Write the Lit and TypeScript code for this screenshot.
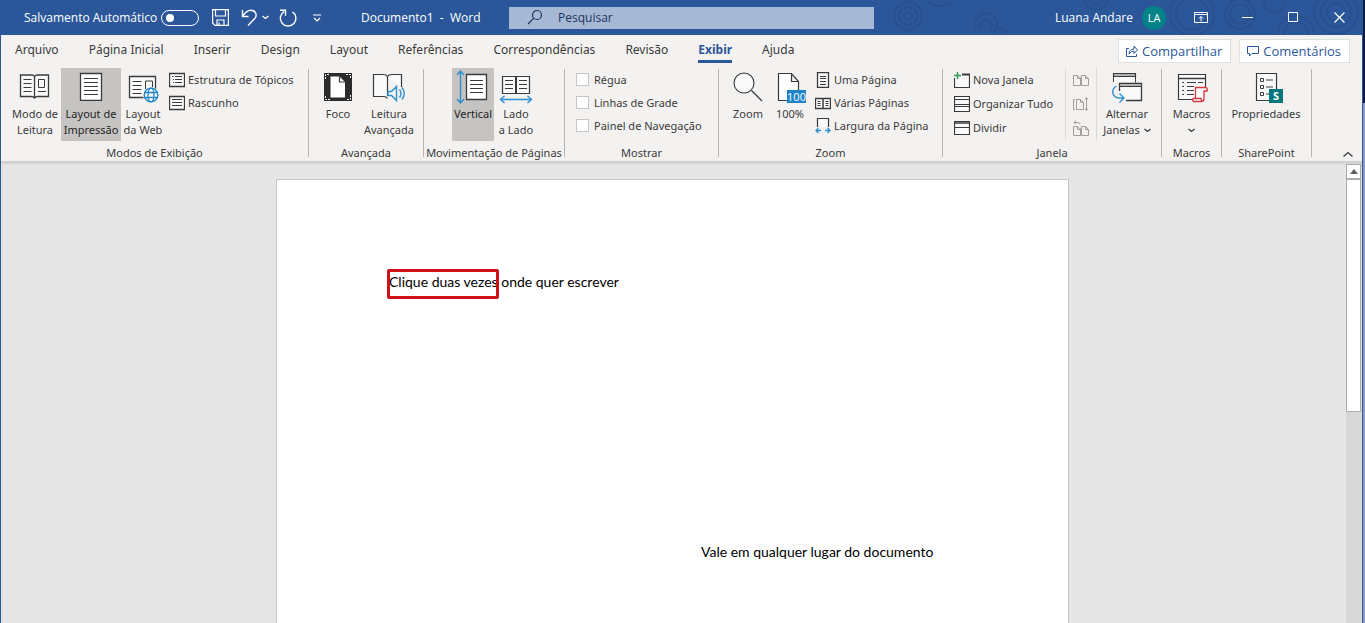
import { LitElement, html, svg, css, nothing } from "lit";
import { customElement, property, state } from "lit/decorators.js";
import { classMap } from "lit/directives/class-map.js";

const INK = "#3b3a39";
const BLUE = "#2e8fd0";

const pic = (w: number, h: number, body: unknown) => html`<svg
  width=${w} height=${h} viewBox="0 0 ${w} ${h}" fill="none" stroke=${INK} stroke-width="1" aria-hidden="true">${body}</svg>`;

const icons: Record<string, () => unknown> = {
  read: () => pic(32, 32, svg`
    <path d="M15.500 7.500c-1-1.500-2-1.500-3-1.500H1.500v21.500h11c1 0 2 .3 3 1.500c1-1.200 2-1.500 3-1.500h11V6H18.500c-1 0-2 0-3 1.500zM15.500 7.500V29" fill="#fafafa" stroke-width="1.300"/>
    <path d="M4.500 10.500h8M4.500 14.500h8M4.500 18.500h8M4.500 22.500h8M19 22.500h8M19.500 10.500h6v8h-6z"/>`),
  print: () => pic(32, 32, svg`
    <path d="M5.500 4.500h21v27h-21z" fill="#fff" stroke-width="1.300"/>
    <path d="M9 9.500h14M9 13.500h14M9 17.500h14M9 21.500h14M9 25.500h14"/>`),
  web: () => pic(32, 34, svg`
    <path d="M2.500 7.500h26v21h-26z" fill="#fafafa" stroke-width="1.300"/>
    <path d="M5.500 12.500h9M5.500 16.500h9M5.500 20.500h9M5.500 24.500h9M18.500 20v-8h7v7"/>
    <circle cx="24" cy="26" r="8" fill="#f3f2f1" stroke="none"/>
    <g stroke="#1e83c9" stroke-width="1.300"><circle cx="24" cy="26" r="6.800" fill="#fff"/><ellipse cx="24" cy="26" rx="3" ry="6.800"/><path d="M17.500 23.500h13M17.500 28.500h13"/></g>`),
  focus: () => pic(32, 34, svg`<g transform="translate(0 1)">
    <path d="M2 3h28v28H2z" fill="#2b2b2b" stroke="none"/>
    <path d="M8.500 6.500h9l5.500 5.500v15.500h-14.500z" fill="#fff" stroke="none"/>
    <path d="M17.500 6.500v5.500h5.500" stroke-width="1.200"/>
    <path d="M3.500 9V4.500H8M24 4.500h4.500V9M28.500 25v4.500H24M8 29.500H3.500V25" stroke="#fff" stroke-dasharray="2 1"/></g>`),
  listen: () => pic(34, 34, svg`
    <path d="M15.500 27V7.500c-1-1.700-2.500-2-4-2H1.500v22h10.500c1.500 0 2.500.5 3.500 2M15.500 7.500c1-1.700 2.500-2 4-2h10V18" fill="#fafafa" stroke-width="1.200"/>
    <path d="M16 22.500h3.500l5-5v14l-5-5H16zM27.500 20.500q3 4 0 8M30 18.500q4.500 6 0 12" stroke=${BLUE} stroke-width="1.400" fill="#f3f2f1"/>`),
  vertical: () => pic(36, 36, svg`
    <path d="M11.500 5.500h20v25h-20z" fill="#fff" stroke-width="1.300"/>
    <path d="M15 11.500h13M15 15.500h13M15 19.500h13M15 23.500h13"/>
    <path d="M5.500 2.500v31M2 6l3.500-4 3.500 4M2 30l3.500 4 3.500-4" stroke=${BLUE} stroke-width="1.400"/>`),
  side: () => pic(34, 36, svg`
    <path d="M3.500 7.500h27v17h-27z" fill="#fafafa" stroke-width="1.200"/><path d="M17 7v18" stroke-width="2"/>
    <path d="M6 11.500h8M6 15.500h8M6 19.500h8M20 11.500h8M20 15.500h8M20 19.500h8"/>
    <path d="M2 30.500h30M5.500 27l-4 3.500 4 3.500M28.500 27l4 3.500-4 3.500" stroke=${BLUE} stroke-width="1.400"/>`),
  zoom: () => pic(34, 34, svg`
    <circle cx="13" cy="14" r="10" fill="#fafafa" stroke-width="1.100"/><path d="M20.500 21.500 31 32" stroke-width="1.300"/>`),
  hundred: () => pic(34, 36, svg`<g transform="translate(0 1)">
    <path d="M20 30.500H5.500v-27h13l7 8V20M18.500 3.500v8h7" fill="#fff" stroke-width="1.200"/>
    <path d="M14 20h19v13H14z" fill="#1e83c9" stroke="none"/>
    <text x="23.500" y="31" font-size="11" font-family="Open Sans" fill="#fff" stroke="none" text-anchor="middle">100</text></g>`),
  windows: () => pic(34, 34, svg`
    <path d="M3.500 13V4.500h22v9" fill="#fafafa"/><path d="M3.500 4.500h22v3h-22z" fill="#b5b3b1" stroke-width="1.200"/>
    <path d="M9.500 14.500h22v17h-22z" fill="#fafafa" stroke="none"/>
    <path d="M9.500 22v-7.500h22v17H16" stroke-width="1.300"/><path d="M9.500 14.500h22v3h-22z" fill="#b5b3b1"/>
    <path d="M6.500 17c-6 3.500-4.500 11 2 12h5M9.500 24.500l4.500 4.500-4.500 4.500" stroke=${BLUE} stroke-width="1.400"/>`),
  macros: () => pic(34, 34, svg`
    <path d="M18 30.500H3.500v-25h27V18" fill="#fafafa" stroke-width="1.200"/><path d="M3.500 9.500h27" stroke-width="1.500"/>
    <path d="M7 13.500h2M12 13.500h9M23 13.500h5M7 17.500h2M12 17.500h7M7 21.500h2M12 21.500h7M7 25.500h2M12 25.500h7"/>
    <path d="M20.500 29V18.500h10.500q2 1 1 3.500h-3v8q0 2.500-3 2.500H18.500q-1.500-1-.5-3h8q0 2 1.500 2.500" stroke="#d9363e" stroke-width="1.300" fill="#fafafa"/>`),
  props: () => pic(34, 36, svg`<g transform="translate(0 1)">
    <path d="M7.500 3.500h20v27h-20z" fill="#fafafa" stroke-width="1.200"/>
    <path d="M11.500 8.500h3v3h-3zM11.500 15.500h3v3h-3zM11.500 22.500h3v3h-3zM17 10h7M17 17h7M17 24h3"/>
    <path d="M20 19h14v14H20z" fill="#03787c" stroke="none"/>
    <text x="27" y="30" font-size="11" font-weight="700" font-family="Open Sans" fill="#fff" stroke="none" text-anchor="middle">S</text></g>`),
  outline: () => pic(16, 16, svg`<path d="M.5 1.500h15v13H.5z" fill="#fafafa" stroke-width="1.300"/><path d="M3 4.500h1.500M6 4.500h7M4 7.500h1M6 7.500h7M4 10.500h1M6 10.500h7"/>`),
  draft: () => pic(16, 16, svg`<path d="M.5 1.500h15v13H.5z" fill="#fafafa" stroke-width="1.300"/><path d="M3 4.500h10M3 7.500h10M3 10.500h10"/>`),
  one: () => pic(16, 16, svg`<path d="M2.500.5h11v15h-11z" fill="#fafafa" stroke-width="1.300"/><path d="M5 4.500h6M5 6.500h6M5 9.500h6M5 12.500h6"/>`),
  many: () => pic(16, 16, svg`<path d="M.5 3.500h15v10H.5z" fill="#fafafa" stroke-width="1.300"/><path d="M8 3v11" stroke-width="1.500"/><path d="M2.500 6.500h3M2.500 8.500h3M2.500 10.500h3M10.500 6.500h3M10.500 8.500h3M10.500 10.500h3"/>`),
  width: () => pic(16, 16, svg`<path d="M2.500 9V.5h11V9" fill="#fafafa" stroke-width="1.200"/><path d="M1 12.500h5M10 12.500h5M3.500 10 1 12.500 3.500 15M12.500 10l2.500 2.500-2.500 2.500" stroke=${BLUE} stroke-width="1.300"/>`),
  newwin: () => pic(16, 16, svg`<path d="M.5 6v9.500h15v-13H8" fill="#fafafa" stroke-width="1.200"/><path d="M8 2.500h8" stroke-width="2"/><path d="M3.500 0v7M0 3.500h7" stroke="#f3f2f1" stroke-width="3"/><path d="M3.500 0v7M0 3.500h7" stroke="#2f9e4f" stroke-width="1.400"/>`),
  arrange: () => pic(16, 16, svg`<path d="M.5.500h15v15H.5zM.5 3.500h15M.5 8.500h15M.5 10.500h15" fill="#fafafa" stroke-width="1.200"/>`),
  split: () => pic(16, 16, svg`<path d="M.5 1.500h15v13H.5zM.5 7.500h15" fill="#fafafa" stroke-width="1.200"/><path d="M.5 3h15" stroke-width="1.500"/>`),
  sbs: () => pic(16, 16, svg`<path d="M.5 3.500h4l2 2h1v8h-7zM8.500 3.500h4l3 3v7h-7zM4.500 3.500v3h3M12.500 3.500v3h3" stroke="#a19f9d"/>`),
  sync: () => pic(16, 16, svg`<path d="M2 3.500H.5v10H2M3.500 3.500h4l3 3v7h-7zM7.500 3.500v3h3M13.500 2v12M12 3.500l1.500-2 1.500 2M12 12.500l1.500 2 1.500-2" stroke="#a19f9d"/>`),
  reset: () => pic(16, 16, svg`<path d="M.5 6.500h4l2 2h1v7h-7zM8.500 6.500h4l3 3v6h-7zM4.500 6.500v3h3M12.500 6.500v3h3M7 4.500q0-2-2-2H1M3 .5l-2 2 2 2" stroke="#a19f9d"/>`),
};

const caret = () => html`<svg class="caret" width="7" height="5" viewBox="0 0 7 5" fill="none" stroke=${INK} stroke-width="1.300" aria-hidden="true"><path d="M.5 1l3 2.500 3-2.500"/></svg>`;

@customElement("ribbon-big")
class RibbonBig extends LitElement {
  @property() icon = "";
  @property({ type: Array }) lines: string[] = [];
  @property({ type: Boolean }) pressed = false;
  @property({ type: Boolean }) menu = false;

  static styles = css`
    :host { display: block; }
    button {
      width: 100%; height: 73px; border: 0; padding: 0; background: none; color: #3b3a39;
      font: 11px/16px "Noto Sans", sans-serif; white-space: nowrap;
      display: flex; flex-direction: column; align-items: center;
    }
    button:hover { background: #dedcda; }
    button[aria-pressed="true"] { background: #c6c4c2; color: #252423; }
    .pic { height: 37px; padding-top: 1px; display: flex; align-items: flex-start; justify-content: center; }
    .line { display: flex; align-items: center; justify-content: center; gap: 4px; height: 16px; }
    svg { display: block; }
  `;

  render() {
    const last = this.lines.length - 1;
    return html`<button type="button" aria-pressed=${this.pressed ? "true" : "false"}>
      <span class="pic">${icons[this.icon]()}</span>
      ${this.lines.map((t, i) => html`<span class="line">${t}${this.menu && i === last ? caret() : nothing}</span>`)}
    </button>`;
  }
}

@customElement("ribbon-group")
class RibbonGroup extends LitElement {
  @property() label = "";

  static styles = css`
    :host { display: flex; flex-direction: column; flex: none; box-sizing: border-box; position: relative; padding-top: 2px; height: 95px; }
    :host::after { content: ""; position: absolute; right: 0; top: 3px; bottom: 4px; width: 1px; background: #b8b6b4; }
    .body { display: flex; height: 77px; padding-right: 1px; }
    .label { font: 11px/16px "Noto Sans", sans-serif; color: #3b3a39; text-align: center; white-space: nowrap; padding-right: 1px; }
  `;

  render() {
    return html`<div class="body"><slot></slot></div><div class="label">${this.label}</div>`;
  }
}

const TABS = ["Arquivo", "Página Inicial", "Inserir", "Design", "Layout", "Referências", "Correspondências", "Revisão", "Exibir", "Ajuda"];

@customElement("app-root")
class AppRoot extends LitElement {
  @state() private tab = "Exibir";

  static styles = css`
    :host {
      display: flex; flex-direction: column; height: 100vh; box-sizing: border-box; overflow: hidden;
      position: relative; padding: 0 3px 0 1px; background: #2b579a;
      font: 12px/16px "Open Sans", "Noto Sans", sans-serif; color: #3b3a39;
    }
    .edge { position: absolute; right: 0; top: 0; bottom: 0; width: 2px; background: linear-gradient(#101a3a 0 103px, #8d9bbd 103px); }
    button { font: inherit; color: inherit; border: 0; background: none; padding: 0; }
    svg { display: block; }

    .title { display: flex; align-items: center; height: 35px; flex: none; position: relative; color: #fff; background: #2b579a; padding-left: 23px; }
    .title > * { position: relative; }
    .title > .deco { position: absolute; right: 0; top: 0; }
    .auto { display: flex; align-items: center; justify-content: space-between; white-space: nowrap; width: 175px; margin-right: 13px; }
    .auto input { appearance: none; box-sizing: border-box; width: 38px; height: 16px; margin: 0; border: 1px solid #fff; border-radius: 8px; display: flex; align-items: center; padding-left: 4px; }
    .auto input::before { content: ""; width: 8px; height: 8px; border-radius: 50%; background: #fff; }
    .quick { display: flex; align-items: center; width: 149px; }
    .save { margin-right: 12px; }
    .undo { margin-right: 4px; }
    .undomenu { margin-right: 10px; }
    .redo { margin-right: 16px; }
    .name { flex: 0 1 148px; margin: 0; font: inherit; white-space: pre; }
    .search { flex: 0 1 365px; display: flex; align-items: center; gap: 14px; height: 22px; box-sizing: border-box; padding-left: 18px; background: #a6b8d4; color: #1c3660; }
    .search input { flex: 1; min-width: 0; border: 0; padding: 0; background: none; font: inherit; color: inherit; outline: none; }
    .search input::placeholder { color: #1c3660; opacity: 1; }
    .user { margin-left: auto; display: flex; align-items: center; gap: 9px; white-space: nowrap; padding-right: 12px; }
    .avatar { width: 24px; height: 24px; border-radius: 50%; background: #038387; font-size: 11px; line-height: 24px; text-align: center; }
    .win { width: 46px; height: 35px; display: flex; align-items: center; justify-content: center; }

    .tabs { display: flex; align-items: center; height: 31px; flex: none; background: #f3f2f1; padding: 0 12px 0 14px; }
    .tablist { display: flex; gap: 30px; align-self: stretch; }
    .tab { font-family: "Noto Sans", sans-serif; white-space: nowrap; border-bottom: 3px solid transparent; height: 28px; padding-top: 5px; box-sizing: border-box; }
    .tab.on { font-weight: 700; color: #2b579a; border-color: #2b579a; }
    .acts { margin-left: auto; display: flex; gap: 8px; }
    .act { display: flex; align-items: center; gap: 4px; height: 24px; padding: 0 8px 0 7px; background: #fff; border: 1px solid #e1dfdd; color: #2b579a; font-size: 13px; font-weight: 500; white-space: nowrap; box-sizing: border-box; }

    .ribbon { display: flex; flex: none; background: #f3f2f1; height: 95px; position: relative; font: 11px/16px "Noto Sans", sans-serif; }
    .views { width: 308px; }
    .immersive { width: 115px; }
    .move { width: 141px; }
    .show { width: 154px; }
    .zoom { width: 224px; }
    .window { width: 219px; }
    .macros { width: 60px; }
    .share { width: 90px; }
    .w42 { width: 42px; } .w44 { width: 44px; } .w52 { width: 52px; } .w60 { width: 60px; } .w88 { width: 88px; }
    .lead { margin-left: 8px; }
    .lead28 { margin-left: 28px; }
    .list { display: flex; flex-direction: column; }
    .small { display: flex; align-items: center; gap: 3px; height: 23px; white-space: nowrap; }
    .window .small { height: 24px; }
    .list.after { padding-left: 4px; }
    .checks { padding-left: 11px; }
    .check { display: flex; align-items: center; gap: 5px; height: 23px; white-space: nowrap; }
    .check input { appearance: none; box-sizing: border-box; width: 13px; height: 13px; margin: 0; border: 1px solid #c8c6c4; background: #fff; }
    .wins { padding-left: 11px; width: 111px; }
    .pairs { height: 72px; border: solid #dcdad8; border-width: 0 1px; padding: 0 7px; }
    .collapse { margin-left: auto; align-self: flex-end; width: 28px; height: 14px; display: flex; align-items: center; justify-content: center; }

    .desk { flex: 1; min-height: 0; display: flex; background: #e6e6e6; box-shadow: inset 0 3px 2px #d2d0ce; }
    .view { flex: 1; display: flex; justify-content: center; overflow: hidden; padding: 18px 2px 0 0; }
    .page { width: 793px; box-sizing: border-box; flex: 0 1 auto; height: 1123px; background: #fff; border: 1px solid #c6c6c6; padding: 92px 112px; color: #000; font: 14px/20px Lato, Carlito, sans-serif; }
    .page p { margin: 0; white-space: nowrap; }
    .page .far { margin-top: 250px; padding-left: 312px; }
    .mark { position: relative; }
    .mark::after { content: ""; position: absolute; inset: -4px -1px -9px -2px; border: 3px solid #d01218; border-radius: 2px; }
    .scroll { width: 15px; flex: none; background: #d8d8d8; margin: 3px 1px 0 0; display: flex; flex-direction: column; }
    .up { height: 15px; box-sizing: border-box; background: #fff; border: 1px solid #ababab; display: flex; align-items: center; justify-content: center; }
    .thumb { height: 233px; box-sizing: border-box; background: #fff; border: 1px solid #ababab; }
  `;

  private small(icon: string, text: string) {
    return html`<button type="button" class="small">${icons[icon]()}<span>${text}</span></button>`;
  }

  private iconOnly(icon: string, label: string) {
    return html`<button type="button" class="small" aria-label=${label} disabled>${icons[icon]()}</button>`;
  }

  private check(text: string) {
    return html`<label class="check"><input type="checkbox" />${text}</label>`;
  }

  private titleBar() {
    return html`<header class="title">
      <svg class="deco" width="500" height="35" viewBox="0 0 500 35" fill="none" stroke="#27508f" stroke-width="2" aria-hidden="true">
        <circle cx="46" cy="16" r="14"/><circle cx="46" cy="16" r="9"/><circle cx="46" cy="16" r="4"/>
        <path d="M66 2q10 8 22 0M114 28a11 11 0 1 1 18 4M118 28a6 6 0 1 1 10 2M132 33q6-9 14 0"/>
        <circle cx="234" cy="-2" r="12"/><circle cx="234" cy="-2" r="7"/>
        <circle cx="330" cy="14" r="22"/><circle cx="330" cy="14" r="16"/>
        <circle cx="378" cy="14" r="15"/><circle cx="378" cy="14" r="10"/>
        <circle cx="434" cy="34" r="18"/><circle cx="434" cy="34" r="12"/><circle cx="412" cy="2" r="10"/>
        <circle cx="474" cy="12" r="22"/><circle cx="474" cy="12" r="15"/><circle cx="474" cy="12" r="9"/>
      </svg>
      <label class="auto">Salvamento Automático<input type="checkbox" role="switch" /></label>
      <div class="quick">
        <button class="save" aria-label="Salvar"><svg width="17" height="17" viewBox="0 0 17 17" fill="none" stroke="#fff" stroke-width="1.200"><path d="M.6.600h15.800v15.800H3L.6 14zM3.500.600v6.400h10V.600M5 16.400V11h7v5.400M7 16v-2.500"/></svg></button>
        <button class="undo" aria-label="Desfazer"><svg width="17" height="17" viewBox="0 0 17 17" fill="none" stroke="#fff" stroke-width="1.400"><path d="M1.500 1v6.500h6M1.500 7.500C4 3.500 7 1 10.500 1.300c5 .7 5.500 5.500 3.500 8L7 16.500"/></svg></button>
        <button class="undomenu" aria-label="Opções de desfazer"><svg width="7" height="5" viewBox="0 0 7 5" fill="none" stroke="#fff" stroke-width="1.300"><path d="M.5 1l3 2.500 3-2.500"/></svg></button>
        <button class="redo" aria-label="Repetir"><svg width="18" height="18" viewBox="0 0 18 18" fill="none" stroke="#fff" stroke-width="1.400"><path d="M13.500 2.800A7.800 7.800 0 1 1 5 2.600M1 1.200h5.500v5.500"/></svg></button>
        <button aria-label="Personalizar"><svg width="8" height="8" viewBox="0 0 8 8" fill="none" stroke="#fff" stroke-width="1.200"><path d="M0 1h8M1 4l3 3 3-3"/></svg></button>
      </div>
      <h1 class="name">Documento1  -  Word</h1>
      <label class="search"><svg width="17" height="17" viewBox="0 0 17 17" fill="none" stroke="#1c3660" stroke-width="1.200" aria-hidden="true"><circle cx="10" cy="6" r="4.500"/><path d="M6.800 9.200 1 15"/></svg><input type="text" placeholder="Pesquisar" aria-label="Pesquisar" /></label>
      <div class="user"><span>Luana Andare</span><span class="avatar">LA</span></div>
      <button class="win" aria-label="Opções da faixa"><svg width="14" height="12" viewBox="0 0 14 12" fill="none" stroke="#fff"><path d="M.5.500h13v10H.5zM.5 2.500h13M7 9.500V4.500M5 6.500l2-2 2 2"/></svg></button>
      <button class="win" aria-label="Minimizar"><svg width="11" height="11" viewBox="0 0 11 11" stroke="#fff"><path d="M0 5.500h11"/></svg></button>
      <button class="win" aria-label="Maximizar"><svg width="11" height="11" viewBox="0 0 11 11" fill="none" stroke="#fff"><path d="M.5.500h9v9H.5z"/></svg></button>
      <button class="win" aria-label="Fechar"><svg width="11" height="11" viewBox="0 0 11 11" stroke="#fff" stroke-width="1.200"><path d="M.5.500l10 10M10.500.500l-10 10"/></svg></button>
    </header>`;
  }

  render() {
    return html`
      ${this.titleBar()}
      <nav class="tabs">
        <div class="tablist">
          ${TABS.map((t) => html`<button class=${classMap({ tab: true, on: t === this.tab })} @click=${() => (this.tab = t)}>${t}</button>`)}
        </div>
        <div class="acts">
          <button class="act"><svg width="12" height="12" viewBox="0 0 12 12" fill="none" stroke="#2b579a"><path d="M3 3.500H.5v8h10V9M3 9q0-5 5-5V1l3.500 4L8 8.500V6Q5 6 3 9z"/></svg>Compartilhar</button>
          <button class="act"><svg width="12" height="12" viewBox="0 0 12 12" fill="none" stroke="#2b579a"><path d="M.5 1.500h11v7H5L2.500 11V8.500h-2z"/></svg>Comentários</button>
        </div>
      </nav>
      <section class="ribbon">
        <ribbon-group class="views" label="Modos de Exibição">
          <ribbon-big class="lead w52" icon="read" .lines=${["Modo de", "Leitura"]}></ribbon-big>
          <ribbon-big class="w60" icon="print" pressed .lines=${["Layout de", "Impressão"]}></ribbon-big>
          <ribbon-big class="w44" icon="web" .lines=${["Layout", "da Web"]}></ribbon-big>
          <div class="list after">${this.small("outline", "Estrutura de Tópicos")}${this.small("draft", "Rascunho")}</div>
        </ribbon-group>
        <ribbon-group class="immersive" label="Avançada">
          <ribbon-big class="lead w42" icon="focus" .lines=${["Foco"]}></ribbon-big>
          <ribbon-big class="w60" icon="listen" .lines=${["Leitura", "Avançada"]}></ribbon-big>
        </ribbon-group>
        <ribbon-group class="move" label="Movimentação de Páginas">
          <ribbon-big class="lead28 w42" icon="vertical" pressed .lines=${["Vertical"]}></ribbon-big>
          <ribbon-big class="w44" icon="side" .lines=${["Lado", "a Lado"]}></ribbon-big>
        </ribbon-group>
        <ribbon-group class="show" label="Mostrar">
          <div class="list checks">${this.check("Régua")}${this.check("Linhas de Grade")}${this.check("Painel de Navegação")}</div>
        </ribbon-group>
        <ribbon-group class="zoom" label="Zoom">
          <ribbon-big class="lead w42" icon="zoom" .lines=${["Zoom"]}></ribbon-big>
          <ribbon-big class="w42" icon="hundred" .lines=${["100%"]}></ribbon-big>
          <div class="list after">${this.small("one", "Uma Página")}${this.small("many", "Várias Páginas")}${this.small("width", "Largura da Página")}</div>
        </ribbon-group>
        <ribbon-group class="window" label="Janela">
          <div class="list wins">${this.small("newwin", "Nova Janela")}${this.small("arrange", "Organizar Tudo")}${this.small("split", "Dividir")}</div>
          <div class="list pairs">${this.iconOnly("sbs", "Exibir Lado a Lado")}${this.iconOnly("sync", "Rolagem Sincronizada")}${this.iconOnly("reset", "Redefinir Posição")}</div>
          <ribbon-big class="w60" icon="windows" menu .lines=${["Alternar", "Janelas"]}></ribbon-big>
        </ribbon-group>
        <ribbon-group class="macros" label="Macros">
          <ribbon-big class="w60" icon="macros" menu .lines=${["Macros", ""]}></ribbon-big>
        </ribbon-group>
        <ribbon-group class="share" label="SharePoint">
          <ribbon-big class="w88" icon="props" .lines=${["Propriedades"]}></ribbon-big>
        </ribbon-group>
        <button class="collapse" aria-label="Recolher a faixa"><svg width="10" height="7" viewBox="0 0 10 7" fill="none" stroke="#3b3a39" stroke-width="1.300"><path d="M.5 5.500l4.500-4 4.500 4"/></svg></button>
      </section>
      <main class="desk">
        <div class="view">
          <article class="page">
            <p><span class="mark">Clique duas vezes</span> onde quer escrever</p>
            <p class="far">Vale em qualquer lugar do documento</p>
          </article>
        </div>
        <div class="scroll">
          <button class="up" aria-label="Rolar para cima"><svg width="8" height="5" viewBox="0 0 8 5" fill="#606060"><path d="M0 5l4-5 4 5z"/></svg></button>
          <div class="thumb"></div>
        </div>
      </main>
      <div class="edge"></div>
    `;
  }
}
